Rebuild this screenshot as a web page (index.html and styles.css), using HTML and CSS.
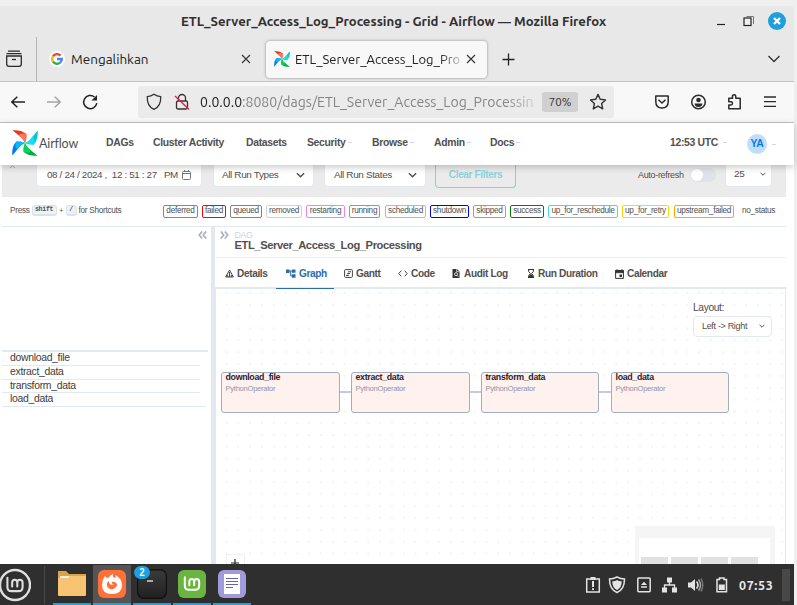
FILE: index.html
```html
<!DOCTYPE html>
<html lang="en">
<head>
<meta charset="utf-8">
<title>ETL_Server_Access_Log_Processing - Grid - Airflow</title>
<link rel="stylesheet" href="styles.css">
</head>
<body>
<svg class="defs" width="0" height="0">
  <symbol id="pinwheel" viewBox="0 0 26 26">
    <path d="M.4.3C5 0 11 .5 14.500 4.500L13 13C11.500 8 5 4.500.4.3Z" fill="#e43921"/>
    <path d="M6.500 5.500C10 8 12 10 13 13C14.500 10 15 7 14.500 4.500C11 2.500 8 3.500 6.500 5.500Z" fill="#ff7557"/>
    <path d="M25.700.4C26 5 25.500 11 21.500 14.500L13 13C18 11.500 21.500 5 25.700.4Z" fill="#00c7d4"/>
    <path d="M20.500 6.500C18 10 16 12 13 13C16 14.500 19 15 21.500 14.500C23.500 11 22.500 8 20.500 6.500Z" fill="#11e1ee"/>
    <path d="M25.600 25.700C21 26 15 25.500 11.500 21.500L13 13C14.500 18 21 21.500 25.600 25.700Z" fill="#00ad46"/>
    <path d="M19.500 20.500C16 18 14 16 13 13C11.500 16 11 19 11.500 21.500C15 23.500 18 22.500 19.500 20.500Z" fill="#04d659"/>
    <path d="M.3 25.600C0 21 .5 15 4.500 11.500L13 13C8 14.500 4.500 21 .3 25.600Z" fill="#017cee"/>
    <path d="M5.500 19.500C8 16 10 14 13 13C10 11.500 7 11 4.500 11.500C2.500 15 3.500 18 5.500 19.500Z" fill="#0cb6ff"/>
  </symbol>
  <symbol id="mint" viewBox="0 0 20 20"><path d="M2 3V12.500Q2 17 6.500 17H13.500Q18 17 18 12.500V8Q18 5 15.200 5Q12.400 5 12.400 8V12M12.400 8Q12.400 5 9.700 5Q7 5 7 8V12M2 3V4" fill="none" stroke="currentColor" stroke-width="2.200" stroke-linecap="round"/></symbol>
  <symbol id="chev" viewBox="0 0 10 6"><path d="M1 1L5 5L9 1" fill="none" stroke="currentColor" stroke-width="1.600"/></symbol>
</svg>

<div class="window">
  <header class="titlebar">
    <span class="title">ETL_Server_Access_Log_Processing - Grid - Airflow — Mozilla Firefox</span>
    <svg class="wincontrols" width="74" height="24" viewBox="0 0 74 24">
      <path d="M3 15.500H11" stroke="#222" stroke-width="1.200"/>
      <path d="M32.500 7.500H39.500V15" fill="none" stroke="#777"/>
      <rect x="30" y="9" width="7" height="7.500" fill="#eee" stroke="#222" stroke-width="1.200"/>
      <circle cx="63" cy="12" r="9" fill="#209fde"/>
      <path d="M60 9L66 15M66 9L60 15" stroke="#fff" stroke-width="2.300"/>
    </svg>
  </header>

  <div class="tabs">
    <div class="history">
      <svg width="18" height="18" viewBox="0 0 18 18" fill="none" stroke="#2b2b2b" stroke-width="1.300"><path d="M3.500 1.200H14.500M2 3.700H16" stroke-linecap="round"/><path d="M1.700 6H16.300V14Q16.300 16.300 14 16.300H4Q1.700 16.300 1.700 14Z"/><path d="M7 9.500H11"/></svg>
    </div>
    <div class="tab tab-google">
      <svg class="favicon" width="16" height="16" viewBox="0 0 16 16"><circle cx="8" cy="8" r="8" fill="#fff"/><g fill="none" stroke-width="2.400"><path d="M4 5.300A4.800 4.800 0 0 1 11.500 4.600" stroke="#ea4335"/><path d="M4 5.300A4.800 4.800 0 0 0 4 10.700" stroke="#fbbc05"/><path d="M4 10.700A4.800 4.800 0 0 0 11.300 11.500" stroke="#34a853"/><path d="M11.300 11.500A4.800 4.800 0 0 0 12.800 8H8" stroke="#4285f4"/></g></svg>
      <span class="tab-name">Mengalihkan</span>
      <svg width="10" height="10" viewBox="0 0 10 10"><path d="M1 1L9 9M9 1L1 9" stroke="#333" stroke-width="1.100"/></svg>
    </div>
    <div class="tab tab-active">
      <svg class="favicon" width="16" height="16"><use href="#pinwheel"/></svg>
      <span class="tab-name fade">ETL_Server_Access_Log_Pro</span>
      <svg width="10" height="10" viewBox="0 0 10 10"><path d="M1 1L9 9M9 1L1 9" stroke="#333" stroke-width="1.100"/></svg>
    </div>
    <svg class="newtab" width="13" height="13" viewBox="0 0 13 13"><path d="M6.500.5V12.500M.5 6.500H12.500" stroke="#222" stroke-width="1.300"/></svg>
    <svg class="alltabs" width="12" height="8" viewBox="0 0 12 8"><path d="M.5 1L6 6.500L11.500 1" fill="none" stroke="#333" stroke-width="1.400"/></svg>
  </div>

  <div class="toolbar">
    <svg class="nav-icons" width="90" height="18" viewBox="0 0 90 18" fill="none" stroke-width="1.500">
      <path d="M15 9H1.800M7.300 3.700L1.800 9L7.300 14.300" stroke="#222"/>
      <path d="M37 9H50M44.800 3.700L50.200 9L44.800 14.300" stroke="#a4a4a4"/>
      <path d="M84.500 4A6.600 6.600 0 1 0 86.800 10.200" stroke="#222"/><path d="M87 2V7.500H81.500Z" fill="#222"/>
    </svg>
    <div class="urlbar">
      <svg width="16" height="18" viewBox="0 0 16 18"><path d="M8 1.300C10 2.800 12.500 3.600 14.700 3.700C15 9.500 12.700 14.300 8 16.300C3.300 14.300 1 9.500 1.300 3.700C3.500 3.600 6 2.800 8 1.300Z" fill="none" stroke="#333" stroke-width="1.300"/></svg>
      <svg class="lock" width="16" height="18" viewBox="0 0 16 18" fill="none" stroke="#333" stroke-width="1.300"><rect x="2.500" y="8" width="11" height="8" rx="1.500"/><path d="M4.500 8V5A3.500 3.500 0 0 1 11.500 5V8"/><path d="M1 3L15 16.500" stroke="#e22850" stroke-width="1.500"/></svg>
      <span class="url"><b>0.0.0.0</b>:8080/dags/ETL_Server_Access_Log_Processin</span>
      <span class="zoom">70%</span>
      <svg class="star" width="18" height="18" viewBox="0 0 18 18"><path d="M9 1.400L11.200 6.300L16.500 6.900L12.600 10.500L13.700 15.900L9 13.200L4.300 15.900L5.400 10.500L1.500 6.900L6.800 6.300Z" fill="none" stroke="#333" stroke-width="1.400" stroke-linejoin="round"/></svg>
    </div>
    <svg class="ext-icons" width="124" height="18" viewBox="0 0 124 18" fill="none" stroke="#2b2b2b" stroke-width="1.500">
      <path d="M1.800 3H14.200V8.500Q14.200 15 8 15Q1.800 15 1.800 8.500Z" stroke-linejoin="round"/><path d="M4.500 6.800L8 10L11.500 6.800"/>
      <circle cx="44.500" cy="9" r="6.800"/><circle cx="44.500" cy="7" r="2.300" fill="#2b2b2b" stroke="none"/><path d="M40.500 10.500H48.500Q48 14 44.500 14Q41 14 40.500 10.500Z" fill="#2b2b2b" stroke="none"/>
      <path d="M74.800 15.700V12H77Q78.500 12 78.500 10.300Q78.500 8.800 77 8.800H74.800V5.200H78.500V3.400Q78.500 1.700 80.200 1.700Q81.800 1.700 81.800 3.400V5.200H86.200V15.700Z" stroke-linejoin="round"/>
      <path d="M110 4H122M110 8.700H122M110 13.400H122" stroke-width="1.300"/>
    </svg>
  </div>

  <nav class="airflow-nav">
    <svg class="logo" width="26" height="26"><use href="#pinwheel"/></svg>
    <span class="brand">Airflow</span>
    <ul class="menu">
      <li>DAGs</li><li>Cluster Activity</li><li>Datasets</li><li class="drop">Security</li><li class="drop">Browse</li><li class="drop">Admin</li><li class="drop">Docs</li>
    </ul>
    <span class="clock drop">12:53 UTC</span>
    <span class="avatar">YA</span><span class="drop"></span>
  </nav>

  <main class="page">
    <section class="filters">
      <svg class="caret" width="34" height="5" viewBox="0 0 34 5"><path d="M8 3L10.500 1L13 3" fill="none" stroke="#aaa"/></svg>
      <div class="field date"><span>08 / 24 / 2024 ,&nbsp; 12 : 51 : 27 &nbsp; PM</span><svg width="9" height="10" viewBox="0 0 9 10" fill="none" stroke="#777"><rect x=".5" y="1.500" width="8" height="8" rx="1"/><path d="M.5 3.500H8.500M2.500 0V2M6.500 0V2"/></svg></div>
      <div class="field types"><span>All Run Types</span><svg width="9" height="6"><use href="#chev"/></svg></div>
      <div class="field states"><span>All Run States</span><svg width="9" height="6"><use href="#chev"/></svg></div>
      <div class="clear">Clear Filters</div>
      <span class="auto">Auto-refresh</span>
      <span class="toggle"></span>
      <div class="field count"><span>25</span><svg width="6" height="4"><use href="#chev"/></svg></div>
    </section>

    <section class="legend">
      <div class="keys">Press <kbd class="shift">shift</kbd><small>+</small><kbd class="slash">/</kbd> <span class="for">for Shortcuts</span></div>
      <div class="states-list">
        <span class="deferred">deferred</span><span class="failed">failed</span><span class="queued">queued</span><span class="removed">removed</span><span class="restarting">restarting</span><span class="running">running</span><span class="scheduled">scheduled</span><span class="shutdown">shutdown</span><span class="skipped">skipped</span><span class="success">success</span><span class="reschedule">up_for_reschedule</span><span class="retry">up_for_retry</span><span class="upstream">upstream_failed</span><span class="none">no_status</span>
      </div>
    </section>

    <div class="split">
      <aside class="tasks">
        <svg class="collapse" width="9" height="8" viewBox="0 0 9 8"><path d="M4.200.5L1.200 4L4.200 7.500M8.200.5L5.200 4L8.200 7.500" fill="none" stroke="#a0aec0" stroke-width="1.600"/></svg>
        <ul>
          <li>download_file</li><li>extract_data</li><li>transform_data</li><li>load_data</li>
        </ul>
      </aside>
      <section class="detail">
        <div class="crumb">
          <svg width="9" height="8" viewBox="0 0 9 8"><path d="M.8.5L3.800 4L.8 7.500M4.800.5L7.800 4L4.800 7.500" fill="none" stroke="#a0aec0" stroke-width="1.600"/></svg>
          <div><small>DAG</small><h1>ETL_Server_Access_Log_Processing</h1></div>
        </div>
        <div class="subtabs">
          <div class="t1"><svg width="9" height="9" viewBox="0 0 9 9"><path d="M4.500 1L8.300 8H.7ZM4.500 3V8M2.700 6V8M6.300 6V8" fill="none" stroke="#444"/></svg>Details</div>
          <div class="t2"><svg width="10" height="9" viewBox="0 0 10 9"><path d="M0 .5H3.500V4H0ZM6 .5H9.500V3.700H6ZM6 5.200H9.500V8.700H6Z" fill="#2b6cb0"/><path d="M3 2H6.500M4.700 2V7H6.500" fill="none" stroke="#2b6cb0"/></svg>Graph</div>
          <div class="t3"><svg width="9" height="9" viewBox="0 0 9 9" fill="none" stroke="#444"><rect x=".6" y=".6" width="7.800" height="7.800" rx="1"/><path d="M4 2.800H7M3 4.600H6M2 6.400H5"/></svg>Gantt</div>
          <div class="t4"><svg width="10" height="7" viewBox="0 0 10 7"><path d="M3.300.7L.8 3.500L3.300 6.300M6.700.7L9.200 3.500L6.700 6.300" fill="none" stroke="#444"/></svg>Code</div>
          <div class="t5"><svg width="8" height="9" viewBox="0 0 8 9"><path d="M.5 0H5L7.500 2.500V9H.5Z" fill="#333"/><circle cx="4" cy="5.200" r="1.500" fill="none" stroke="#fff" stroke-width=".8"/><path d="M5 6.200L6.500 7.800M4.700 0V2.700H7.500" stroke="#fff" stroke-width=".7" fill="none"/></svg>Audit Log</div>
          <div class="t6"><svg width="8" height="9" viewBox="0 0 8 9"><path d="M1 .5H7M1 8.500H7M1.700.5V2.700L3.500 4.500L1.700 6.500V8.500H6.300V6.500L4.500 4.500L6.300 2.700V.5" fill="none" stroke="#333"/><path d="M2 8V6.700L4 5L6 6.700V8Z" fill="#333"/></svg>Run Duration</div>
          <div class="t7"><svg width="9" height="10" viewBox="0 0 9 10"><path d="M.6 1.600H8.400V9.400H.6Z" fill="none" stroke="#333"/><path d="M.5 1.500H8.500V3.700H.5ZM2 0V2M7 0V2" fill="#333" stroke="#333" stroke-width=".8"/><rect x="4.500" y="5.500" width="2.500" height="2.500" fill="#333"/></svg>Calendar</div>
        </div>
        <div class="canvas">
          <svg class="edges" width="569" height="10" viewBox="0 0 569 10"><path d="M124 5H135M254 5H265M383 5H395" stroke="#b0bccb" stroke-width="1.500"/></svg>
          <div class="node n1"><b>download_file</b><span>PythonOperator</span></div>
          <div class="node n2"><b>extract_data</b><span>PythonOperator</span></div>
          <div class="node n3"><b>transform_data</b><span>PythonOperator</span></div>
          <div class="node n4"><b>load_data</b><span>PythonOperator</span></div>
          <div class="layout"><label>Layout:</label><div class="select"><span>Left -&gt; Right</span><svg width="6" height="4"><use href="#chev"/></svg></div></div>
          <div class="plus"><svg width="8" height="8" viewBox="0 0 8 8"><path d="M4 0V8M0 4H8" stroke="#222" stroke-width="1.200"/></svg></div>
          <div class="minimap"><div><i></i><i></i><i></i><i></i></div></div>
        </div>
      </section>
    </div>
  </main>

  <footer class="taskbar">
    <svg class="start" width="31" height="34" viewBox="0 0 31 34"><circle cx="15" cy="17" r="15" fill="none" stroke="#dedede" stroke-width="2.400"/><g color="#dedede"><use href="#mint" x="5.500" y="7" width="19" height="19"/></g></svg>
    <span class="sep"></span>
    <div class="apps">
      <div class="app"><svg width="30" height="30" viewBox="0 0 30 30"><path d="M1 2H9L12 5H29V14H1Z" fill="#dda344"/><rect x="3" y="7" width="24" height="4" fill="#eee"/><path d="M1 9H11L13 7H29V26Q29 27 28 27H2Q1 27 1 26Z" fill="#f8c471"/></svg></div>
      <div class="app current"><svg width="30" height="30" viewBox="0 0 30 30"><rect x="1" y="1" width="28" height="28" rx="6" fill="#ff7139"/><path d="M8 7Q9 9 11 9Q13 6 16 5Q15 8 18 9Q19 8 18.500 6Q25 10 25 16Q25 25 15 25Q5 25 5 16Q5 11 8 7Z" fill="#fff"/><path d="M12 12Q9 14 10 17Q12 21 16 20Q20 19 20 15Q18 12 15 13Q14 15 17 15Q14 17 12 14Z" fill="#ff7139"/></svg></div>
      <div class="app"><svg width="30" height="30" viewBox="0 0 30 30"><defs><linearGradient id="term" x2="0" y2="1"><stop stop-color="#3b3b3b"/><stop offset="1" stop-color="#202020"/></linearGradient></defs><rect x=".6" y=".8" width="28.800" height="28.500" rx="6" fill="url(#term)" stroke="#111" stroke-width="1.200"/><path d="M10 12H16" stroke="#eee" stroke-width="1.300"/></svg><span class="badge">2</span></div>
      <div class="app"><svg width="30" height="30" viewBox="0 0 30 30"><rect x="1" y="1" width="28" height="28" rx="6" fill="#69b53f"/><g color="#fff"><use href="#mint" x="6" y="5" width="18" height="19"/></g></svg></div>
      <div class="app"><svg width="30" height="30" viewBox="0 0 30 30"><rect x="1" y="1" width="28" height="28" rx="6" fill="#a29bd9"/><path d="M7 5H23V25H7Z" fill="#fff"/><path d="M9 9.500H21M9 12.500H21M9 15.500H21M9 18.500H16" stroke="#6862a5" stroke-width="1.200"/></svg></div>
    </div>
    <svg class="tray" width="146" height="20" viewBox="0 0 146 20" fill="none" stroke="#e4e4e4" stroke-width="1.500">
      <rect x="1.700" y="4" width="12.600" height="13"/><path d="M5.500 3.500H10.500" stroke-width="3"/><path d="M8 6V12M8 13.300V15" stroke-width="2"/>
      <path d="M32 2C34.500 3.300 37 4 39.500 4C39.500 11 37 15.500 32 17.500C27 15.500 24.500 11 24.500 4C27 4 29.500 3.300 32 2Z"/><path d="M32 5C33.500 6 35.500 6.400 36.800 6.500C36.500 11 35 13.500 32 15C29 13.500 27.500 11 27.200 6.500C28.500 6.400 30.500 6 32 5Z" fill="#e4e4e4" stroke="none"/>
      <rect x="52.800" y="3" width="12.400" height="13.700" rx="1"/><path d="M56 10L59 6.700L62 10ZM56 11.300H62V12.800H56Z" fill="#e4e4e4" stroke="none"/>
      <path d="M82 2.500H87V7.500H82ZM77 12.500H82V17.500H77ZM87 12.500H92V17.500H87Z" fill="#e4e4e4" stroke="none"/><path d="M84.500 7V10H79.500V13M84.500 10H89.500V13" stroke-width="1.300"/>
      <path d="M103 7.500H106L110 4V16L106 12.500H103Z" fill="#e4e4e4" stroke="none"/><path d="M111.500 6.500Q114.500 10 111.500 13.500"/><path d="M113.500 4.500Q117.500 10 113.500 15.500" stroke="#aaa"/><path d="M116 3.500Q119.500 10 116 16.500" stroke="#777"/>
      <path d="M132 4.500H134.500V3H139V4.500H141.500V16.700H132Z"/><rect x="133.800" y="9.500" width="6" height="5.500" fill="#e4e4e4" stroke="none"/>
    </svg>
    <span class="time">07:53</span>
    <span class="desktop"></span>
  </footer>
</div>
</body>
</html>
```

FILE: styles.css
```css
* { box-sizing: border-box; }
body { margin: 0; width: 797px; height: 605px; overflow: hidden; background: #efefef; font-family: "Liberation Sans", Arial, sans-serif; color: #51504f; }
svg { display: block; flex: none; }
.defs { position: absolute; }
ul { list-style: none; margin: 0; padding: 0; }
.window { width: 794px; height: 605px; padding-top: 6px; display: flex; flex-direction: column; }
.titlebar, .tabs, .toolbar, .taskbar { font-family: Ubuntu, "Noto Sans", sans-serif; white-space: nowrap; flex: none; }

.titlebar { height: 31px; background: #e8e8e8; display: flex; align-items: center; padding-left: 181px; }
.title { width: 425px; margin: -2px 108px 0 0; font-size: 13.150px; font-weight: 600; color: #303030; }
.wincontrols { margin-top: -2px; }

.tabs { height: 45px; background: #e8e8e8; border-bottom: 1px solid #c4c4c4; display: flex; align-items: center; }
.history { width: 37px; height: 44px; padding: 13px 0 0 5px; border-right: 1px solid #b5b5b5; }
.tab { display: flex; align-items: center; font-size: 13.500px; color: #222; }
.tab-google { width: 229px; padding: 0 15px 0 12px; }
.tab-name { flex: 1; margin-left: 6px; line-height: 22px; }
.tab-active { width: 221px; height: 37px; padding: 0 11px 0 8px; background: #f8f8f8; border-radius: 4px; box-shadow: 0 0 3px #888; font-size: 13px; }
.tab-active .tab-name { margin-left: 5px; }
.fade { -webkit-mask-image: linear-gradient(to right, #000 145px, transparent 172px); mask-image: linear-gradient(to right, #000 145px, transparent 172px); }
.newtab { margin-left: 15px; }
.alltabs { margin-left: 253px; }

.toolbar { height: 41px; background: #f8f8f8; border-bottom: 1px solid #c4c4c4; display: flex; align-items: center; padding-left: 10px; }
.urlbar { width: 476px; height: 32px; margin-left: 38px; padding-left: 8px; background: #ebebeb; border-radius: 4px; display: flex; align-items: center; }
.lock { margin-left: 12px; }
.url { width: 336px; margin-left: 10px; font-size: 14.050px; line-height: 24px; color: #858585; -webkit-mask-image: linear-gradient(to right, #000 305px, transparent 345px); mask-image: linear-gradient(to right, #000 305px, transparent 345px); }
.url b { font-weight: 400; color: #222; }
.zoom { width: 36px; height: 20px; margin-left: 6px; border-radius: 3px; background: #d0d0d0; font-size: 11.500px; line-height: 20px; text-align: center; color: #333; }
.star { margin-left: 11px; }
.ext-icons { margin-left: 40px; }

.airflow-nav { position: relative; z-index: 2; flex: none; height: 42px; padding-left: 12px; background: #fff; box-shadow: 0 2px 7px rgba(0,0,0,.22); display: flex; align-items: center; font-size: 10.400px; letter-spacing: -.03em; font-weight: 700; white-space: nowrap; }
.logo { margin-top: -3px; }
.brand { width: 67px; margin: -2px 0 0 1px; font: 12.500px Lato, sans-serif; letter-spacing: -.15px; }
.menu { display: grid; grid-template-columns: 47px 93px 61px 65px 62px 56px 180px; margin-top: -3px; }
.drop::after { content: ""; display: inline-block; width: 4px; height: 1px; margin-left: 2px; background: #e3cfe2; vertical-align: 3px; }
.clock { width: 77px; margin-top: -3px; }
.clock.drop::after { margin-left: 5px; }
.avatar { width: 20px; height: 20px; border-radius: 50%; background: #c0ddfa; color: #017cee; line-height: 20px; text-align: center; margin: -1px 3px 0 0; }

.page { flex: 1; min-height: 0; padding-left: 2px; background: #fff; display: flex; flex-direction: column; overflow: hidden; letter-spacing: -.036em; }
.page * { letter-spacing: -.036em; }
.filters { flex: none; width: 784px; height: 32px; background: #ebebeb; display: flex; align-items: flex-start; font-size: 9.950px; white-space: nowrap; }
.field { height: 22px; background: #fff; border: 1px solid #e2e8f0; border-top: 0; border-radius: 0 0 4px 4px; display: flex; align-items: center; justify-content: space-between; padding: 0 8px 2px; }
.date { width: 166px; padding: 0 10px 2px; font-size: 9.850px; }
.types { width: 101px; margin-left: 11px; }
.states { width: 102px; margin-left: 10px; padding-left: 9px; }
.clear { width: 81px; height: 23px; margin-left: 9px; border: 1px solid #8ccdd8; border-top: 0; border-radius: 0 0 4px 4px; color: #8fd0db; font-size: 10.050px; font-weight: 700; line-height: 19px; text-align: center; }
.auto { width: 52px; margin-left: 122px; font-size: 9px; line-height: 20px; }
.toggle { width: 26px; height: 14px; margin-top: 3px; padding: 1px; border-radius: 7px; background: #dfe3e9; }
.toggle::before { content: ""; display: block; width: 12px; height: 12px; border-radius: 50%; background: #fff; }
.count { width: 47px; margin-left: 9px; padding-bottom: 4px; padding-right: 5px; }

.legend { flex: none; width: 784px; height: 30px; border-bottom: 1px solid #e2e8f0; display: flex; align-items: flex-start; font-size: 8.240px; white-space: nowrap; }
.keys { width: 161px; padding: 8px 0 0 8px; display: flex; align-items: center; }
kbd { height: 11px; background: #edf2f7; border: 1px solid #dbe2ea; border-bottom-width: 2px; border-radius: 3px; font: 700 6.500px/8px "Liberation Mono", monospace; text-align: center; }
.shift { width: 25px; margin-left: 2px; }
.keys small { width: 9px; font-size: 7px; text-align: center; }
.slash { width: 11px; }
.for { margin-left: 2px; }
.states-list { display: grid; grid-template-columns: 39px 28px 36px 40px 43px 36px 45px 43px 37px 38px 74px 52px 64px 41px; padding-top: 8px; }
.states-list span { height: 13px; margin-right: 4px; border: 1px solid; border-radius: 2px; line-height: 10px; display: flex; justify-content: center; }
.states-list .running, .states-list .retry { margin-right: 5px; }
.states-list .none { margin-right: 0; }
.deferred { border-color: mediumpurple !important; } .failed { border-color: red !important; } .queued { border-color: gray !important; }
.removed { border-color: lightgrey !important; } .restarting { border-color: violet !important; } .running { border-color: lime !important; }
.scheduled { border-color: tan !important; } .shutdown { border-color: blue !important; } .skipped { border-color: hotpink !important; }
.success { border-color: green !important; } .reschedule { border-color: turquoise !important; } .retry { border-color: gold !important; }
.upstream { border-color: orange !important; } .none { border-color: transparent !important; }

.split { flex: 1; min-height: 0; width: 784px; display: flex; }
.tasks { width: 209px; }
.collapse { margin: 4px 0 0 196px; }
.tasks ul { width: 206px; margin-top: 111px; font-size: 10.430px; color: #3d3d3d; border-top: 2px solid #e2e8f0; }
.tasks li { width: 198px; height: 14px; padding-left: 8px; line-height: 12px; letter-spacing: -.03em; border-bottom: 1px solid #e2e8f0; }
.tasks li:nth-child(3) { height: 13px; }
.tasks li:last-child { width: 204px; }
.detail { flex: 1; border-left: 4px solid #e2e8f0; display: flex; flex-direction: column; }
.crumb { height: 31px; border-bottom: 1px solid #edf0f4; display: flex; padding: 4px 0 0 5px; }
.crumb > div { margin-left: 5.500px; }
.crumb small { display: block; font-size: 8.800px; line-height: 9px; color: #cbd5e0; }
.crumb h1 { margin: 0; font-size: 11.150px; line-height: 11px; }
.subtabs { height: 31px; border-bottom: 2px solid #e2e8f0; display: grid; grid-template-columns: 61px 58px 59px 54px 75px 88px 1fr; font-size: 10.100px; font-weight: 700; white-space: nowrap; }
.subtabs > div { height: 31px; display: flex; align-items: center; gap: 3px; padding: 0 0 1px 10px; }
.subtabs svg { margin-top: 1px; }
.subtabs .t2 { width: 58px; color: #2b6cb0; border-bottom: 1px solid #2b6cb0; padding-bottom: 0; }
.subtabs .t4 { padding-left: 5px; gap: 3px; }
.subtabs .t5 { padding-left: 5px; gap: 4px; }
.subtabs .t6 { padding-left: 5px; gap: 3px; }
.subtabs .t7 { padding-left: 5px; }

.canvas { position: relative; flex: 1; min-height: 0; overflow: hidden; border: solid #e2e8f0; border-width: 0 1px; background: radial-gradient(circle at center, #dfdfdf 0, #e8e8e8 .5px, transparent .95px) 4.600px -2px / 11.820px 11.850px; }
.edges { position: absolute; left: 0; top: 98px; }
.node { position: absolute; top: 83px; width: 119px; height: 41px; padding: 0 3.500px; border: 1px solid #a0aec0; border-radius: 3px; background: #fff1ee; }
.node b, .node span { display: block; }
.node b { font-size: 8.820px; line-height: 9px; color: #2a2430; }
.node span { margin-top: 3px; font-size: 7.600px; line-height: 8px; color: #9095ad; }
.n1 { left: 5px; } .n2 { left: 135px; } .n3 { left: 265px; width: 118px; } .n4 { left: 395px; width: 118px; }
.layout { position: absolute; left: 477px; top: 12px; width: 79px; font-size: 10.270px; }
.layout label { display: block; line-height: 13px; }
.select { height: 21px; margin-top: 2px; padding: 0 6px 2px 8px; background: #fff; border: 1px solid #e2e8f0; border-radius: 4px; display: flex; align-items: center; justify-content: space-between; font-size: 9px; white-space: nowrap; }
.plus { position: absolute; left: 10px; top: 265px; width: 19px; height: 20px; padding: 4px; background: #fff; border: 1px solid #f0f0f0; }
.minimap { position: absolute; left: 419px; top: 237px; width: 140px; height: 60px; padding: 12px 5px 0 4px; background: #f5f5f5; }
.minimap div { height: 48px; padding: 19px 2px 0; background: #fff; display: flex; gap: 3px; }
.minimap i { width: 27px; height: 10px; background: #e1e1e1; }

.taskbar { position: relative; z-index: 3; height: 41px; background: #2f2f2f; display: flex; align-items: center; }
.start { margin-top: 1px; }
.sep { width: 1px; height: 38px; margin: 0 8px 0 13px; background: #4a4a4a; }
.apps { display: flex; gap: 2px; }
.app { position: relative; width: 38px; height: 41px; padding: 5px 4px 0; border-bottom: 2px solid #209fde; }
.current { background: linear-gradient(#2f2f2f 1px, #555 1px); }
.badge { position: absolute; left: 1px; top: 2px; width: 16px; height: 13px; border-radius: 7px; background: #209fde; color: #fff; font-size: 10px; font-weight: 600; line-height: 13px; text-align: center; }
.tray { margin: 0 0 0 334px; }
.time { width: 43px; margin-left: 8px; color: #e8e8e8; font-size: 12.500px; font-weight: 700; letter-spacing: .6px; }
.desktop { width: 8px; height: 32px; background: #484848; }
```
